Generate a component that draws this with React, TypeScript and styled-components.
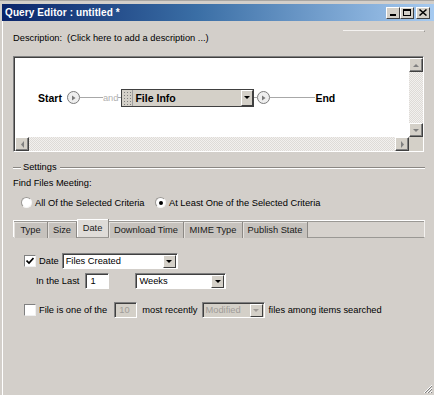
import * as React from 'react';
import styled, { createGlobalStyle } from 'styled-components';

const GlobalStyle = createGlobalStyle`
  html, body {
    margin: 0;
    padding: 0;
    background: #d3cfca;
    overflow: hidden;
  }
  body {
    font-family: "Liberation Sans", Arial, sans-serif;
    font-size: 9.3px;
    color: #000;
  }
`;

const Window = styled.div`
  width: 434px;
  height: 395px;
  box-sizing: border-box;
  padding: 3px 0 0 2px;
  background: #d3cfca;
  border-top: 1px solid #a9a6a2;
  display: flex;
  flex-direction: column;
  position: relative;
  overflow: hidden;
`;

const TitleBar = styled.div`
  height: 17px;
  display: flex;
  align-items: center;
  justify-content: space-between;
  padding: 0 4px 0 3px;
  background: linear-gradient(to right, #0a246a 0%, #3a6ea5 45%, #a6caf0 100%);
`;

const TitleText = styled.span`
  color: #fff;
  font-weight: bold;
  font-size: 10px;
  letter-spacing: 0.1px;
`;

const CaptionButtons = styled.div`
  display: flex;
  align-items: center;
`;

const CaptionButton = styled.div<{ $gap?: number }>`
  width: 14px;
  height: 12px;
  margin-left: ${(p) => p.$gap ?? 0}px;
  box-sizing: border-box;
  background: #d4d0c8;
  border-top: 1px solid #fff;
  border-left: 1px solid #fff;
  border-right: 1px solid #404040;
  border-bottom: 1px solid #404040;
  display: flex;
  align-items: center;
  justify-content: center;
`;

const Body = styled.div`
  flex: 1;
  display: flex;
  flex-direction: column;
  padding: 0 9px 0 10px;
  border-left: 1px solid #fff;
`;

const TopRule = styled.div`
  align-self: flex-end;
  margin: 9px 0 0 0;
  width: 82px;
  height: 2px;
  border-top: 1px solid #f4f2f0;
  border-right: 1px solid #9a9894;
  box-sizing: border-box;
`;

const DescRow = styled.div`
  line-height: 13px;
  display: flex;
  gap: 5px;
`;

const Canvas = styled.div`
  margin-top: 11px;
  width: 411px;
  height: 96px;
  box-sizing: border-box;
  border-top: 1px solid #808080;
  border-left: 1px solid #808080;
  border-right: 1px solid #fff;
  border-bottom: 1px solid #fff;
  box-shadow: inset 1px 1px 0 #404040;
  padding: 1px 0 0 1px;
  display: grid;
  grid-template-columns: 1fr 14px;
  grid-template-rows: 1fr 14px;
  background: #fff;
`;

const Flow = styled.div`
  display: flex;
  align-items: center;
  padding-left: 23px;
  background: #fff;
`;

const FlowLabel = styled.span`
  font-weight: bold;
  font-size: 10.5px;
`;

const Node = styled.div<{ $left?: number }>`
  width: 13px;
  height: 13px;
  box-sizing: border-box;
  margin-left: ${(p) => p.$left ?? 0}px;
  border: 1px solid #7c7c7c;
  border-radius: 50%;
  background: #eeeeee;
  display: flex;
  align-items: center;
  justify-content: center;
`;

const Connector = styled.div<{ $width: number }>`
  width: ${(p) => p.$width}px;
  height: 1px;
  background: #a8a8a8;
`;

const AndLabel = styled.span`
  color: #b0b0b0;
  font-size: 9.3px;
`;

const CriteriaBox = styled.div`
  width: 133px;
  height: 18px;
  box-sizing: border-box;
  border: 1px solid #404040;
  background: #d4d0c8;
  display: flex;
  align-items: stretch;
`;

const Grip = styled.div`
  width: 10px;
  border-right: 1px solid #a0a0a0;
  background-image: radial-gradient(#808080 0.6px, transparent 0.8px);
  background-size: 3px 3px;
  background-position: 1px 1px;
`;

const CriteriaText = styled.span`
  flex: 1;
  font-weight: bold;
  font-size: 10.5px;
  padding-left: 2px;
  line-height: 16px;
`;

const DropButton = styled.div<{ $w?: number }>`
  width: ${(p) => p.$w ?? 12}px;
  box-sizing: border-box;
  background: #d4d0c8;
  border-left: 1px solid #fff;
  border-top: 1px solid #fff;
  border-right: 1px solid #404040;
  border-bottom: 1px solid #404040;
  display: flex;
  align-items: center;
  justify-content: center;
`;

const ScrollTrack = styled.div<{ $vertical?: boolean }>`
  display: flex;
  flex-direction: ${(p) => (p.$vertical ? 'column' : 'row')};
  background: repeating-conic-gradient(#f2f0ee 0 25%, #dedbd7 0 50%) 0 0 / 2px 2px;
`;

const ScrollFill = styled.div`
  flex: 1;
`;

const ScrollArrow = styled.div`
  width: 14px;
  height: 14px;
  box-sizing: border-box;
  background: #d4d0c8;
  border-top: 1px solid #fff;
  border-left: 1px solid #fff;
  border-right: 1px solid #404040;
  border-bottom: 1px solid #404040;
  box-shadow: inset -1px -1px 0 #808080;
  display: flex;
  align-items: center;
  justify-content: center;
`;

const Corner = styled.div`
  background: #d4d0c8;
`;

const GroupLegend = styled.div`
  margin-top: 9px;
  display: flex;
  align-items: center;
  line-height: 13px;
  width: 412px;
`;

const Etched = styled.div<{ $width?: number }>`
  ${(p) => (p.$width ? `width: ${p.$width}px;` : 'flex: 1;')}
  height: 2px;
  box-sizing: border-box;
  border-top: 1px solid #8a8783;
  border-bottom: 1px solid #fff;
`;

const LegendText = styled.span`
  padding: 0 3px 0 2px;
`;

const Caption = styled.div`
  margin-top: 3px;
  line-height: 13px;
`;

const RadioRow = styled.div`
  margin-top: 6px;
  padding-left: 8px;
  display: flex;
  align-items: center;
  height: 13px;
`;

const RadioItem = styled.label<{ $width?: number }>`
  display: flex;
  align-items: center;
  gap: 3px;
  ${(p) => (p.$width ? `width: ${p.$width}px;` : '')}
`;

const RadioCircle = styled.span<{ $on?: boolean }>`
  width: 11px;
  height: 11px;
  box-sizing: border-box;
  border-radius: 50%;
  background: #fff;
  border: 1px solid;
  border-color: #9a9894 #f6f5f4 #f6f5f4 #9a9894;
  display: flex;
  align-items: center;
  justify-content: center;
  &::after {
    content: '';
    width: 4px;
    height: 4px;
    border-radius: 50%;
    background: ${(p) => (p.$on ? '#000' : 'transparent')};
  }
`;

const TabStrip = styled.div`
  margin-top: 11px;
  width: 412px;
  height: 18px;
  box-sizing: border-box;
  display: flex;
  border-top: 1px solid #fff;
  border-left: 1px solid #fff;
  border-right: 1px solid #f4f2f0;
  border-bottom: 1px solid #9a9894;
  box-shadow: inset 0 1px 0 #9a9894, inset 1px 0 0 #9a9894;
  background: #d6d2cd;
`;

const Tab = styled.div<{ $active?: boolean; $width: number }>`
  width: ${(p) => p.$width}px;
  height: ${(p) => (p.$active ? 18 : 16)}px;
  margin-top: ${(p) => (p.$active ? -2 : 1)}px;
  box-sizing: border-box;
  display: flex;
  align-items: center;
  justify-content: center;
  white-space: nowrap;
  background: ${(p) => (p.$active ? '#dfdcd8' : '#c6c2bd')};
  border-right: 1px solid #8c8985;
  box-shadow: ${(p) => (p.$active ? 'inset 1px 1px 0 #fff' : 'inset 1px 1px 0 #e4e1dd')};
  color: #1a1a1a;
`;

const Row = styled.div<{ $top: number; $indent: number }>`
  margin-top: ${(p) => p.$top}px;
  padding-left: ${(p) => p.$indent}px;
  display: flex;
  align-items: center;
  height: 16px;
`;

const CheckBox = styled.span`
  width: 12px;
  height: 12px;
  box-sizing: border-box;
  background: #fff;
  border-top: 1px solid #808080;
  border-left: 1px solid #808080;
  border-right: 1px solid #f0f0f0;
  border-bottom: 1px solid #f0f0f0;
  display: flex;
  align-items: center;
  justify-content: center;
  margin-right: 3px;
`;

const Text = styled.span<{ $gap?: number }>`
  margin-right: ${(p) => p.$gap ?? 0}px;
  white-space: nowrap;
`;

const Select = styled.div<{ $width: number; $gap?: number; $disabled?: boolean }>`
  width: ${(p) => p.$width}px;
  height: 16px;
  margin-right: ${(p) => p.$gap ?? 0}px;
  box-sizing: border-box;
  display: flex;
  align-items: stretch;
  background: ${(p) => (p.$disabled ? '#d4d0c8' : '#fff')};
  border-top: 1px solid #808080;
  border-left: 1px solid #808080;
  border-right: 1px solid #fff;
  border-bottom: 1px solid #fff;
  box-shadow: inset 1px 1px 0 #404040;
  padding: 1px 1px 0 1px;
`;

const SelectText = styled.span<{ $disabled?: boolean }>`
  flex: 1;
  padding-left: 2px;
  line-height: 13px;
  color: ${(p) => (p.$disabled ? '#a09c98' : '#000')};
`;

const TextInput = styled.div<{ $width: number; $gap?: number; $disabled?: boolean }>`
  width: ${(p) => p.$width}px;
  height: 16px;
  margin-right: ${(p) => p.$gap ?? 0}px;
  box-sizing: border-box;
  background: ${(p) => (p.$disabled ? '#d4d0c8' : '#fff')};
  color: ${(p) => (p.$disabled ? '#a09c98' : '#000')};
  border-top: 1px solid #808080;
  border-left: 1px solid #808080;
  border-right: 1px solid #fff;
  border-bottom: 1px solid #fff;
  box-shadow: inset 1px 1px 0 #404040;
  padding-left: 4px;
  line-height: 14px;
`;

const ResizeGrip = styled.svg`
  position: absolute;
  right: 1px;
  bottom: 1px;
`;

const Arrow = ({ dir, color = '#000' }: { dir: 'up' | 'down' | 'left' | 'right'; color?: string }) => {
  const pts = {
    up: '1,4 4,1 7,4',
    down: '1,1 7,1 4,4',
    left: '4,0 4,7 1,3.5',
    right: '1,0 1,7 4,3.5',
  }[dir];
  const w = dir === 'up' || dir === 'down' ? 8 : 5;
  const h = dir === 'up' || dir === 'down' ? 5 : 7;
  return (
    <svg width={w} height={h} viewBox={`0 0 ${w} ${h}`}>
      <polygon points={pts} fill={color} />
    </svg>
  );
};

const Check = () => (
  <svg width="8" height="8" viewBox="0 0 8 8">
    <path d="M0.5 3.5 L3 6 L7.5 1" stroke="#000" strokeWidth="1.7" fill="none" />
  </svg>
);

const NodeGlyph = () => (
  <svg width="5" height="6" viewBox="0 0 5 6">
    <polygon points="1,0.5 1,5.5 4.5,3" fill="#7a7a7a" />
  </svg>
);

const tabs = [
  { label: 'Type', width: 34 },
  { label: 'Size', width: 29 },
  { label: 'Date', width: 32 },
  { label: 'Download Time', width: 75 },
  { label: 'MIME Type', width: 59 },
  { label: 'Publish State', width: 65 },
];

export default function App() {
  return (
    <>
      <GlobalStyle />
      <Window>
        <TitleBar>
          <TitleText>Query Editor : untitled *</TitleText>
          <CaptionButtons>
            <CaptionButton>
              <svg width="6" height="6" viewBox="0 0 6 6">
                <rect x="0" y="4" width="6" height="2" fill="#000" />
              </svg>
            </CaptionButton>
            <CaptionButton>
              <svg width="8" height="7" viewBox="0 0 8 7">
                <rect x="0.5" y="0.5" width="7" height="6" fill="none" stroke="#000" />
                <rect x="0" y="0" width="8" height="2" fill="#000" />
              </svg>
            </CaptionButton>
            <CaptionButton $gap={2}>
              <svg width="8" height="7" viewBox="0 0 8 7">
                <path d="M0.5 0.5 L7.5 6.5 M7.5 0.5 L0.5 6.5" stroke="#000" strokeWidth="1.5" />
              </svg>
            </CaptionButton>
          </CaptionButtons>
        </TitleBar>

        <Body>
          <TopRule />
          <DescRow>
            <span>Description:</span>
            <span>(Click here to add a description ...)</span>
          </DescRow>

          <Canvas>
            <Flow>
              <FlowLabel>Start</FlowLabel>
              <Node $left={5}>
                <NodeGlyph />
              </Node>
              <Connector $width={23} />
              <AndLabel>and</AndLabel>
              <Connector $width={3} />
              <CriteriaBox>
                <Grip />
                <CriteriaText>File Info</CriteriaText>
                <DropButton>
                  <Arrow dir="down" />
                </DropButton>
              </CriteriaBox>
              <Connector $width={3} />
              <Node>
                <NodeGlyph />
              </Node>
              <Connector $width={45} />
              <FlowLabel>End</FlowLabel>
            </Flow>
            <ScrollTrack $vertical>
              <ScrollArrow>
                <Arrow dir="up" color="#808080" />
              </ScrollArrow>
              <ScrollFill />
              <ScrollArrow>
                <Arrow dir="down" color="#808080" />
              </ScrollArrow>
            </ScrollTrack>
            <ScrollTrack>
              <ScrollArrow>
                <Arrow dir="left" color="#808080" />
              </ScrollArrow>
              <ScrollFill />
              <ScrollArrow>
                <Arrow dir="right" color="#808080" />
              </ScrollArrow>
            </ScrollTrack>
            <Corner />
          </Canvas>

          <GroupLegend>
            <Etched $width={8} />
            <LegendText>Settings</LegendText>
            <Etched />
          </GroupLegend>

          <Caption>Find Files Meeting:</Caption>

          <RadioRow>
            <RadioItem $width={134}>
              <RadioCircle />
              <span>All Of the Selected Criteria</span>
            </RadioItem>
            <RadioItem>
              <RadioCircle $on />
              <span>At Least One of the Selected Criteria</span>
            </RadioItem>
          </RadioRow>

          <TabStrip>
            {tabs.map((t) => (
              <Tab key={t.label} $width={t.width} $active={t.label === 'Date'}>
                {t.label}
              </Tab>
            ))}
          </TabStrip>

          <Row $top={15} $indent={11}>
            <CheckBox>
              <Check />
            </CheckBox>
            <Text $gap={3}>Date</Text>
            <Select $width={116}>
              <SelectText>Files Created</SelectText>
              <DropButton $w={13}>
                <Arrow dir="down" />
              </DropButton>
            </Select>
          </Row>

          <Row $top={4} $indent={23}>
            <Text $gap={6}>In the Last</Text>
            <TextInput $width={24} $gap={26}>1</TextInput>
            <Select $width={91}>
              <SelectText>Weeks</SelectText>
              <DropButton $w={13}>
                <Arrow dir="down" />
              </DropButton>
            </Select>
          </Row>

          <Row $top={13} $indent={11}>
            <CheckBox />
            <Text $gap={7}>File is one of the</Text>
            <TextInput $width={23} $gap={5} $disabled>
              10
            </TextInput>
            <Text $gap={4}>most recently</Text>
            <Select $width={63} $gap={4} $disabled>
              <SelectText $disabled>Modified</SelectText>
              <DropButton $w={13}>
                <Arrow dir="down" color="#a09c98" />
              </DropButton>
            </Select>
            <Text>files among items searched</Text>
          </Row>
        </Body>

        <ResizeGrip width="11" height="11" viewBox="0 0 11 11">
          <path d="M10 2 L2 10 M10 5 L5 10 M10 8 L8 10" stroke="#fff" strokeWidth="1" />
          <path d="M10 3 L3 10 M10 6 L6 10 M10 9 L9 10" stroke="#808080" strokeWidth="1" />
        </ResizeGrip>
      </Window>
    </>
  );
}
